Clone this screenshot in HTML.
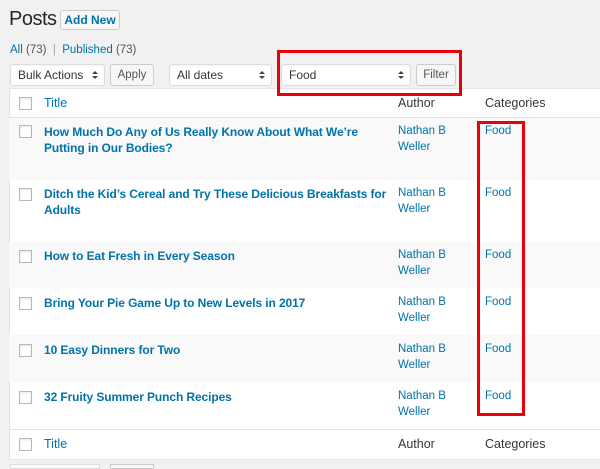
<!DOCTYPE html>
<html><head><style>
*{margin:0;padding:0;box-sizing:border-box}
body{width:600px;height:467px;overflow:hidden;background:#f1f1f1;font-family:"Liberation Sans",Arial,sans-serif;color:#444;position:relative}
.a{position:absolute}
h1{position:absolute;left:9px;top:8px;font-size:20px;font-weight:normal;color:#23282d;letter-spacing:-0.5px}
.btn{position:absolute;background:#f7f7f7;border:1px solid #ccc;border-radius:3px;font-size:11.5px;color:#555;text-align:center}
.sel{position:absolute;background:#fff;border:1px solid #ddd;border-radius:3px;font-size:12px;color:#32373c;padding-left:7px;line-height:20px;box-shadow:inset 0 1px 2px rgba(0,0,0,.05)}
.sel:after{content:"";position:absolute;right:6px;top:6px;border:3px solid transparent;border-bottom:3.5px solid #444;border-top:none}
.sel:before{content:"";position:absolute;right:6px;top:11px;border:3px solid transparent;border-top:3.5px solid #444;border-bottom:none}
.tbl{position:absolute;left:9px;top:88px;width:600px;height:372px;background:#fff;border:1px solid #e5e5e5}
.row{position:absolute;left:9px;width:600px}
.g{background:#f9f9f9}
.cb{position:absolute;left:19px;width:13px;height:13px;border:1px solid #b4b9be;background:#fff;box-shadow:inset 0 1px 2px rgba(0,0,0,.1)}
.t{position:absolute;left:44px;width:352px;font-size:12px;font-weight:bold;color:#0073aa;line-height:16px;letter-spacing:-0.1px}
.au{position:absolute;left:398px;font-size:11.5px;color:#0073aa;line-height:15.5px}
.cat{position:absolute;left:485px;font-size:11.5px;color:#0073aa}
.hd{position:absolute;font-size:12.5px;color:#32373c}
.red{position:absolute;border:3px solid #e8000b}
</style></head><body>
<h1>Posts</h1>
<div class="btn" style="left:60px;top:10px;width:60px;height:20px;line-height:18px;color:#0073aa;font-weight:bold;font-size:12px">Add New</div>
<div class="a" style="left:10px;top:44px;font-size:11.5px;color:#0073aa">All <span style="color:#555">(73)</span> <span style="color:#aaa">&nbsp;|&nbsp;</span> Published <span style="color:#555">(73)</span></div>
<div class="sel" style="left:10px;top:64px;width:95px;height:22px">Bulk Actions</div>
<div class="btn" style="left:110px;top:64px;width:44px;height:22px;line-height:20px">Apply</div>
<div class="sel" style="left:169px;top:64px;width:103px;height:22px">All dates</div>
<div class="sel" style="left:281px;top:64px;width:130px;height:22px">Food</div>
<div class="btn" style="left:416px;top:64px;width:40px;height:22px;line-height:20px">Filter</div>
<div class="tbl"></div>
<div class="cb" style="top:97px"></div>
<div class="hd" style="left:44px;top:96px;color:#0073aa">Title</div>
<div class="hd" style="left:398px;top:96px">Author</div>
<div class="hd" style="left:485px;top:96px">Categories</div>
<div class="row" style="top:117px;height:1px;background:#e1e1e1"></div>
<div class="row g" style="top:118px;height:62px"></div>
<div class="row g" style="top:242px;height:46px"></div>
<div class="row g" style="top:335px;height:47px"></div>
<div class="row" style="top:429px;height:1px;background:#e1e1e1"></div>

<div class="cb" style="top:125px"></div><div class="t" style="top:124px">How Much Do Any of Us Really Know About What We’re Putting in Our Bodies?</div><div class="au" style="top:124px">Nathan B<br>Weller</div><div class="cat" style="top:125px">Food</div>
<div class="cb" style="top:188px"></div><div class="t" style="top:186px">Ditch the Kid’s Cereal and Try These Delicious Breakfasts for Adults</div><div class="au" style="top:186px">Nathan B<br>Weller</div><div class="cat" style="top:187px">Food</div>
<div class="cb" style="top:250px"></div><div class="t" style="top:248px">How to Eat Fresh in Every Season</div><div class="au" style="top:248px">Nathan B<br>Weller</div><div class="cat" style="top:249px">Food</div>
<div class="cb" style="top:297px"></div><div class="t" style="top:295px">Bring Your Pie Game Up to New Levels in 2017</div><div class="au" style="top:295px">Nathan B<br>Weller</div><div class="cat" style="top:296px">Food</div>
<div class="cb" style="top:344px"></div><div class="t" style="top:342px">10 Easy Dinners for Two</div><div class="au" style="top:342px">Nathan B<br>Weller</div><div class="cat" style="top:343px">Food</div>
<div class="cb" style="top:391px"></div><div class="t" style="top:389px">32 Fruity Summer Punch Recipes</div><div class="au" style="top:389px">Nathan B<br>Weller</div><div class="cat" style="top:390px">Food</div>

<div class="cb" style="top:438px"></div>
<div class="hd" style="left:44px;top:437px;color:#0073aa">Title</div>
<div class="hd" style="left:398px;top:437px">Author</div>
<div class="hd" style="left:485px;top:437px">Categories</div>
<div class="a" style="left:10px;top:464px;width:90px;height:5px;background:#fff;border:1px solid #ddd"></div>
<div class="a" style="left:110px;top:464px;width:44px;height:5px;background:#f7f7f7;border:1px solid #ccc"></div>

<div class="red" style="left:277px;top:50px;width:185px;height:46px"></div>
<div class="red" style="left:477px;top:121px;width:48px;height:295px"></div>
</body></html>
